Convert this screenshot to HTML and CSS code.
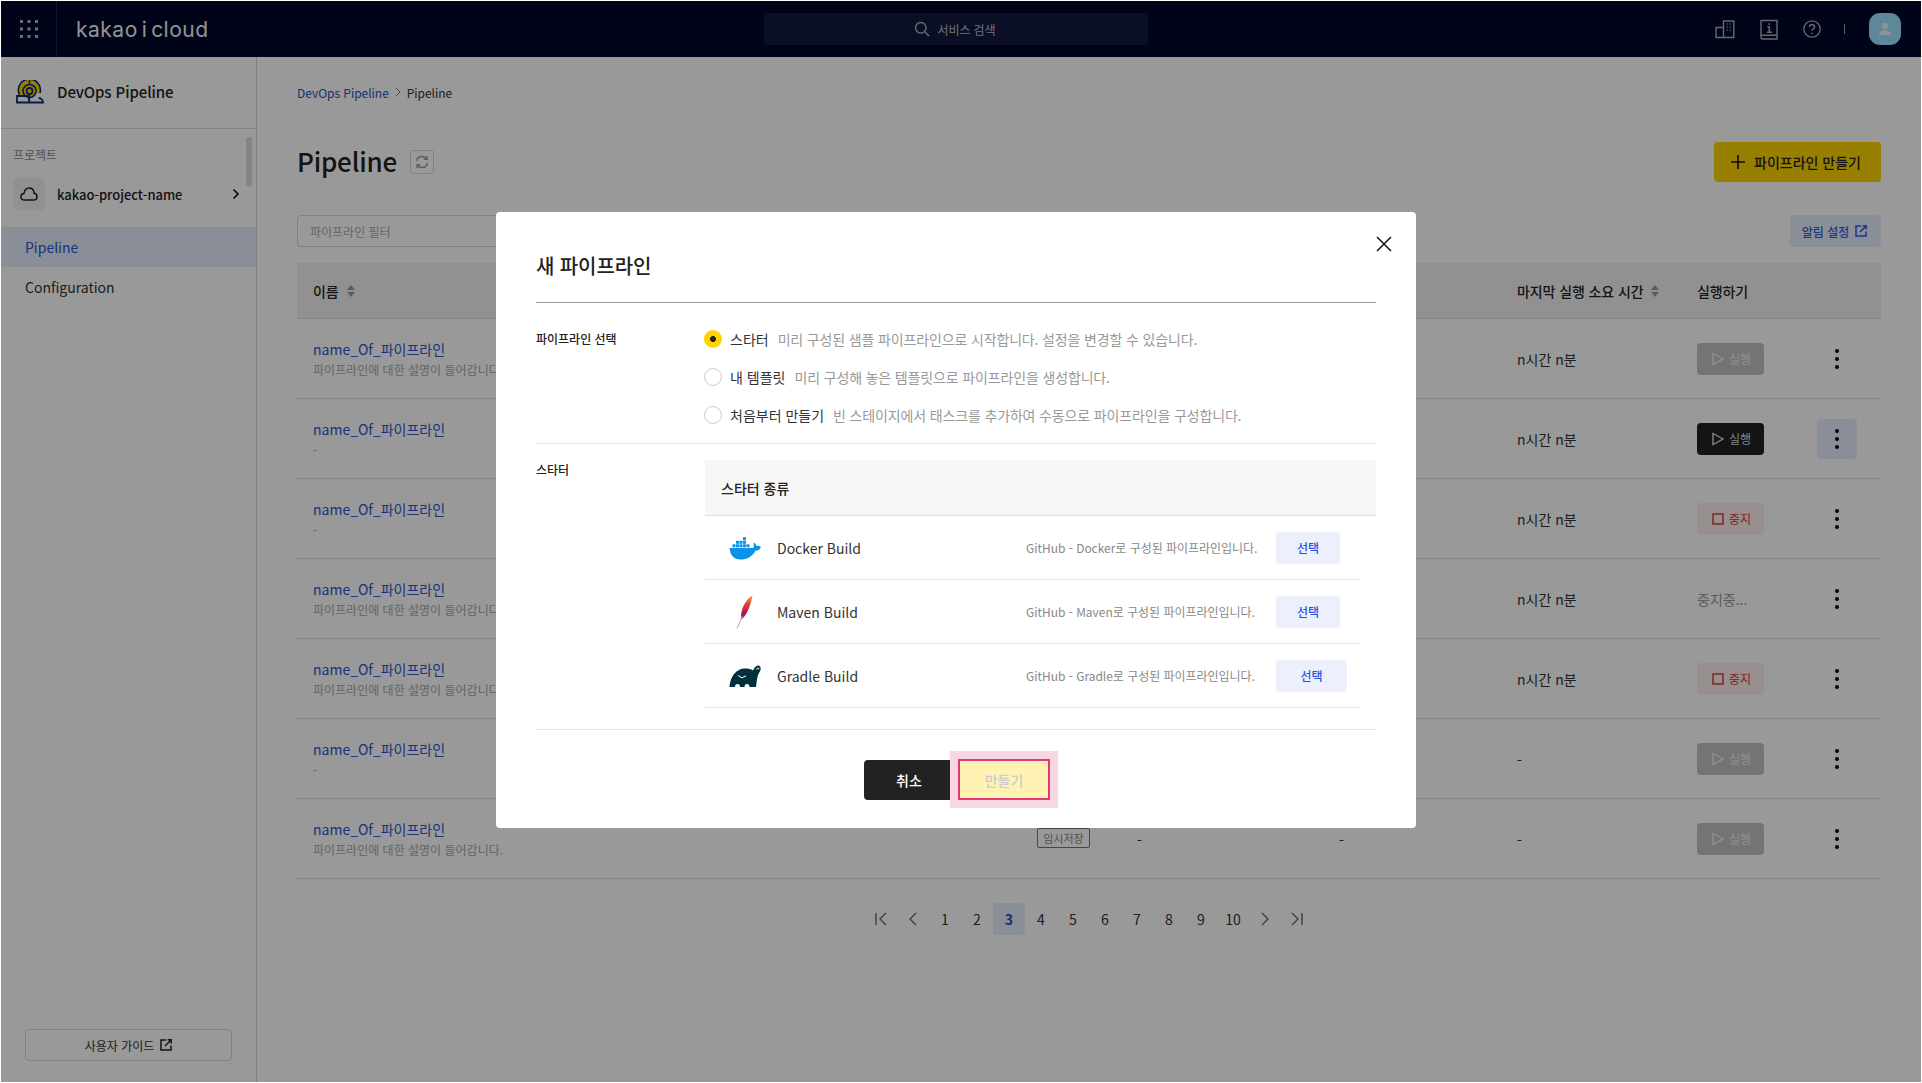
FILE: index.html
```html
<!DOCTYPE html>
<html lang="ko">
<head>
<meta charset="utf-8">
<title>Pipeline</title>
<link rel="stylesheet" href="styles.css">
</head>
<body>
<div class="app">
  <header class="topbar">
    <div class="waffle">
      <svg width="18" height="18" viewBox="0 0 18 18" fill="#b8b8b8"><rect x="0" y="0" width="3" height="3"/><rect x="7.5" y="0" width="3" height="3"/><rect x="15" y="0" width="3" height="3"/><rect x="0" y="7.5" width="3" height="3"/><rect x="7.5" y="7.5" width="3" height="3"/><rect x="15" y="7.5" width="3" height="3"/><rect x="0" y="15" width="3" height="3"/><rect x="7.5" y="15" width="3" height="3"/><rect x="15" y="15" width="3" height="3"/></svg>
    </div>
    <div class="logo">kakao i cloud</div>
    <div class="search">
      <svg width="16" height="16" viewBox="0 0 16 16" fill="none" stroke="#b4b4b4" stroke-width="1.4"><circle cx="6.8" cy="6.8" r="5.3"/><path d="M10.8 10.8 15 15"/></svg>
      <span>서비스 검색</span>
    </div>
    <div class="top-icons">
      <svg width="20" height="20" viewBox="0 0 20 20" fill="none" stroke="#b0b0b0" stroke-width="1.4"><path d="M1 8.5h7.5V18.500H1zM8.500 18.500V2H18.800V18.500H8.500"/><path d="M11.500 5h1.500M14.500 5h1.500M11.500 8h1.500M14.500 8h1.500M11.500 11h1.500M14.500 11h1.500" stroke-width="1.200"/></svg>
      <svg class="book" width="18" height="21" viewBox="0 0 18 21" fill="none" stroke="#b0b0b0" stroke-width="1.400"><path d="M1 18V1.500H17V20H2.500C1.500 20 1 19.300 1 18C1 16.800 1.500 16.200 2.500 16.200H17"/><path d="M9 4.200v1.500M7.300 8h2v5.200M6.800 13.200h5" stroke-width="1.600"/></svg>
      <svg class="help" width="18" height="18" viewBox="0 0 18 18" fill="none" stroke="#b0b0b0" stroke-width="1.300"><circle cx="9" cy="9" r="8.200"/><path d="M6.500 7C6.500 5.400 7.700 4.500 9.100 4.500C10.600 4.500 11.600 5.500 11.600 6.800C11.600 8.700 9 8.800 9 10.800" stroke-width="1.500"/><circle cx="9" cy="13.300" r=".9" fill="#b0b0b0" stroke="none"/></svg>
      <span class="top-sep"></span>
      <div class="avatar">
        <svg width="14" height="14" viewBox="0 0 14 14" fill="#eaf4ff"><circle cx="7" cy="4" r="3.200"/><path d="M1 13c0-3.200 2.600-4.800 6-4.800s6 1.600 6 4.800z"/></svg>
      </div>
    </div>
  </header>

  <div class="body">
    <aside class="sidebar">
      <div class="side-title">
        <svg width="28" height="24" viewBox="0 0 28 24" fill="none">
          <path d="M3.500 15A11 11 0 1 1 24 13" stroke="#0b2a78" stroke-width="1.600" fill="#ffd400"/>
          <circle cx="13.500" cy="11" r="6.500" fill="#ffd400" stroke="#0b2a78" stroke-width="1.600"/>
          <circle cx="13.500" cy="11" r="3" fill="#ffd400" stroke="#0b2a78" stroke-width="1.800"/>
          <path d="M13.500 0v5M13.500 17v4" stroke="#0b2a78" stroke-width="1.400"/>
          <path d="M1 16H13V22.500H1zM13 22.500H27C27 20.500 25.500 18 22.500 18" stroke="#0b2a78" stroke-width="1.800"/>
        </svg>
        <span>DevOps Pipeline</span>
      </div>
      <div class="side-section">
        <div class="side-label">프로젝트</div>
        <div class="project">
          <span class="project-icon">
            <svg width="18" height="14" viewBox="0 0 18 14" fill="none" stroke="#222" stroke-width="1.500"><path d="M4.500 13C2.300 13 1 11.500 1 9.700C1 7.900 2.300 6.600 4 6.500C4.500 3.200 6.500 1 9.200 1C12 1 13.900 3.200 14.200 6.300C15.900 6.700 17 8 17 9.700C17 11.600 15.600 13 13.500 13Z"/></svg>
          </span>
          <span class="project-name">kakao-project-name</span>
          <svg width="8" height="12" viewBox="0 0 8 12" fill="none" stroke="#111" stroke-width="1.600"><path d="M1.500 1.500 6 6l-4.500 4.500"/></svg>
        </div>
      </div>
      <nav class="side-menu">
        <a class="side-item side-active">Pipeline</a>
        <a class="side-item">Configuration</a>
      </nav>
      <div class="side-foot">
        <a class="guide">사용자 가이드
          <svg width="12" height="12" viewBox="0 0 12 12" fill="none" stroke="#222" stroke-width="1.500"><path d="M6 1H1v10h10V6.500"/><path d="M5 7 11 1M7.500 .8H11.200V4.500"/></svg>
        </a>
      </div>
      <span class="side-thumb"></span>
    </aside>

    <main class="main">
      <div class="crumbs"><a>DevOps Pipeline</a>
        <svg width="6" height="10" viewBox="0 0 6 10" fill="none" stroke="#777" stroke-width="1"><path d="M1 1l4 4-4 4"/></svg>
        <span>Pipeline</span></div>
      <div class="title-row">
        <h1>Pipeline</h1>
        <span class="refresh">
          <svg width="14" height="14" viewBox="0 0 14 14" fill="none" stroke="#9a9a9a" stroke-width="1.400"><path d="M1.500 6C2 3.400 4.200 1.500 7 1.500C9 1.500 10.700 2.500 11.700 4M12.500 8C12 10.600 9.800 12.500 7 12.500C5 12.500 3.300 11.500 2.300 10"/><path d="M12 1v3.300H8.800M2 13V9.700H5.200"/></svg>
        </span>
        <button class="create">
          <svg width="16" height="16" viewBox="0 0 16 16" stroke="#111" stroke-width="1.600"><path d="M8 1v14M1 8h14"/></svg>
          파이프라인 만들기
        </button>
      </div>
      <div class="filter-row">
        <div class="filter">파이프라인 필터</div>
        <a class="alert">알림 설정
          <svg width="12" height="12" viewBox="0 0 12 12" fill="none" stroke="#2a5ce0" stroke-width="1.500"><path d="M6 1H1v10h10V6.500"/><path d="M5 7 11 1M7.500 .8H11.200V4.500"/></svg>
        </a>
      </div>

      <div class="table">
        <div class="row head">
          <span class="sortable">이름 <i class="sort"></i></span><span>상태</span><span>마지막 실행</span><span>트리거</span>
          <span class="sortable">마지막 실행 소요 시간 <i class="sort"></i></span><span>실행하기</span><span></span>
        </div>
        <div class="row">
          <div class="name"><a>name_Of_파이프라인</a><small>파이프라인에 대한 설명이 들어갑니다.</small></div><span></span><span></span><span></span>
          <span>n시간 n분</span><button class="run off"><svg width="12" height="14" viewBox="0 0 12 14" fill="none" stroke="currentColor" stroke-width="1.400"><path d="M1 1.500 11 7 1 12.500z"/></svg>실행</button>
          <span class="more"><b></b><b></b><b></b></span>
        </div>
        <div class="row">
          <div class="name"><a>name_Of_파이프라인</a><small>-</small></div><span></span><span></span><span></span>
          <span>n시간 n분</span><button class="run on"><svg width="12" height="14" viewBox="0 0 12 14" fill="none" stroke="currentColor" stroke-width="1.400"><path d="M1 1.500 11 7 1 12.500z"/></svg>실행</button>
          <span class="more more-hover"><b></b><b></b><b></b></span>
        </div>
        <div class="row">
          <div class="name"><a>name_Of_파이프라인</a><small>-</small></div><span></span><span></span><span></span>
          <span>n시간 n분</span><button class="run stop"><svg width="12" height="12" viewBox="0 0 12 12" fill="none" stroke="currentColor" stroke-width="1.400"><rect x="1" y="1" width="10" height="10"/></svg>중지</button>
          <span class="more"><b></b><b></b><b></b></span>
        </div>
        <div class="row">
          <div class="name"><a>name_Of_파이프라인</a><small>파이프라인에 대한 설명이 들어갑니다.</small></div><span></span><span></span><span></span>
          <span>n시간 n분</span><span class="stopping">중지중...</span>
          <span class="more"><b></b><b></b><b></b></span>
        </div>
        <div class="row">
          <div class="name"><a>name_Of_파이프라인</a><small>파이프라인에 대한 설명이 들어갑니다.</small></div><span></span><span></span><span></span>
          <span>n시간 n분</span><button class="run stop"><svg width="12" height="12" viewBox="0 0 12 12" fill="none" stroke="currentColor" stroke-width="1.400"><rect x="1" y="1" width="10" height="10"/></svg>중지</button>
          <span class="more"><b></b><b></b><b></b></span>
        </div>
        <div class="row">
          <div class="name"><a>name_Of_파이프라인</a><small>-</small></div><span></span><span></span><span></span>
          <span class="dash">-</span><button class="run off"><svg width="12" height="14" viewBox="0 0 12 14" fill="none" stroke="currentColor" stroke-width="1.400"><path d="M1 1.500 11 7 1 12.500z"/></svg>실행</button>
          <span class="more"><b></b><b></b><b></b></span>
        </div>
        <div class="row">
          <div class="name"><a>name_Of_파이프라인</a><small>파이프라인에 대한 설명이 들어갑니다.</small></div><span class="tag">임시저장</span><span class="dash">-</span><span class="dash">-</span>
          <span class="dash">-</span><button class="run off"><svg width="12" height="14" viewBox="0 0 12 14" fill="none" stroke="currentColor" stroke-width="1.400"><path d="M1 1.500 11 7 1 12.500z"/></svg>실행</button>
          <span class="more"><b></b><b></b><b></b></span>
        </div>
      </div>

      <div class="pager">
        <a class="pg"><svg width="12" height="14" viewBox="0 0 12 14" fill="none" stroke="#6a6a6a" stroke-width="1.400"><path d="M1 1v12M11 1 5 7l6 6"/></svg></a>
        <a class="pg"><svg width="8" height="14" viewBox="0 0 8 14" fill="none" stroke="#6a6a6a" stroke-width="1.400"><path d="M7 1 1 7l6 6"/></svg></a>
        <a class="pg">1</a><a class="pg">2</a><a class="pg pg-on">3</a><a class="pg">4</a><a class="pg">5</a><a class="pg">6</a><a class="pg">7</a><a class="pg">8</a><a class="pg">9</a><a class="pg">10</a>
        <a class="pg"><svg width="8" height="14" viewBox="0 0 8 14" fill="none" stroke="#6a6a6a" stroke-width="1.400"><path d="M1 1l6 6-6 6"/></svg></a>
        <a class="pg"><svg width="12" height="14" viewBox="0 0 12 14" fill="none" stroke="#6a6a6a" stroke-width="1.400"><path d="M11 1v12M1 1l6 6-6 6"/></svg></a>
      </div>
    </main>
  </div>

  <div class="overlay">
    <section class="modal">
      <svg class="close" width="16" height="16" viewBox="0 0 16 16" stroke="#111" stroke-width="1.500"><path d="M1 1 15 15M15 1 1 15"/></svg>
      <h2>새 파이프라인</h2>
      <div class="form-row first">
        <div class="form-label">파이프라인 선택</div>
        <div class="radios">
          <label class="radio"><i class="dot dot-on"></i><b>스타터</b><span>미리 구성된 샘플 파이프라인으로 시작합니다. 설정을 변경할 수 있습니다.</span></label>
          <label class="radio"><i class="dot"></i><b>내 템플릿</b><span>미리 구성해 놓은 템플릿으로 파이프라인을 생성합니다.</span></label>
          <label class="radio"><i class="dot"></i><b>처음부터 만들기</b><span>빈 스테이지에서 태스크를 추가하여 수동으로 파이프라인을 구성합니다.</span></label>
        </div>
      </div>
      <div class="form-row second">
        <div class="form-label">스타터</div>
        <div class="starter">
          <div class="starter-head">스타터 종류</div>
          <div class="starter-row">
            <span class="starter-icon">
              <svg width="32" height="24" viewBox="0 0 32 24" fill="#0a92e6">
                <path d="M.6 12H24.200C25 10 25 8.300 24.400 6.800C26 7 27 8.400 27.300 9.800C29 9.700 30.800 10.200 32 11C30.800 13.800 28.600 14.700 26.500 14.700C24 20 18 23.500 11.500 23.500C5 23.500 .8 19 .6 12Z"/>
                <rect x="3.500" y="8.300" width="3" height="3"/><rect x="7" y="8.300" width="3" height="3"/><rect x="10.500" y="8.300" width="3" height="3"/><rect x="14" y="8.300" width="3" height="3"/><rect x="17.500" y="8.300" width="3" height="3"/>
                <rect x="7" y="4.800" width="3" height="3"/><rect x="10.500" y="4.800" width="3" height="3"/><rect x="14" y="4.800" width="3" height="3"/>
                <rect x="14" y="1.200" width="3" height="3"/>
              </svg>
            </span>
            <span class="starter-name">Docker Build</span>
            <span class="starter-desc">GitHub - Docker로 구성된 파이프라인입니다.</span>
            <button class="pick">선택</button>
          </div>
          <div class="starter-row">
            <span class="starter-icon">
              <svg width="32" height="34" viewBox="0 0 32 34" fill="none">
                <defs><linearGradient id="feather" x1="0" y1="0" x2="0" y2="1"><stop offset="0" stop-color="#f9a03c"/><stop offset=".35" stop-color="#e2442f"/><stop offset=".7" stop-color="#b5194f"/><stop offset="1" stop-color="#6b2a8f"/></linearGradient></defs>
                <path d="M23.500 .5C18 3.500 12.500 11 12 21L12.300 24.500C17 21 21.500 12 23.500 .5Z" fill="url(#feather)"/>
                <path d="M13.500 21 8 33.500" stroke="#b79ac9" stroke-width="1"/>
              </svg>
            </span>
            <span class="starter-name">Maven Build</span>
            <span class="starter-desc">GitHub - Maven로 구성된 파이프라인입니다.</span>
            <button class="pick">선택</button>
          </div>
          <div class="starter-row">
            <span class="starter-icon">
              <svg width="32" height="22" viewBox="0 0 32 22" fill="#02303a">
                <path d="M.5 22C1 15 4 8 10 5C14 3 20 3 24 5.500C25 3 27 .5 29 .5C31.500 .5 32 3 31.500 5C31 6.500 30 8 29 10C28 13 27.500 18 27 22H20.500C20.500 19.800 19.500 19 18 19C16.500 19 15.500 19.800 15.500 22H11C11 19.800 10 19 8.500 19C7 19 6 19.800 6 22Z"/>
                <path d="M27.500 4.500C28 2.500 30.200 2.500 29.700 4.500" fill="none" stroke="#fff" stroke-width="1"/>
                <path d="M9 10.500 13 12.800 17 10.800" fill="none" stroke="#fff" stroke-width="1"/>
              </svg>
            </span>
            <span class="starter-name">Gradle Build</span>
            <span class="starter-desc">GitHub - Gradle로 구성된 파이프라인입니다.</span>
            <button class="pick pick-wide">선택</button>
          </div>
        </div>
      </div>
      <div class="modal-foot">
        <button class="cancel">취소</button>
        <button class="make">만들기</button>
      </div>
    </section>
  </div>
</div>
</body>
</html>
```

FILE: styles.css
```css
* { box-sizing: border-box; }
html, body { margin: 0; padding: 0; height: 100%; overflow: hidden; background: #fff; }
body { font-family: "Noto Sans CJK KR", "Noto Sans", sans-serif; color: #222; }
button { font-family: inherit; cursor: pointer; }
h1, h2 { margin: 0; }

.app { position: relative; margin: 1px; width: 1920px; height: 1081px; display: flex; flex-direction: column; overflow: hidden; background: #fff; }

/* top bar */
.topbar { height: 56px; flex: none; display: flex; align-items: center; background: #00072b; position: relative; }
.waffle { width: 56px; height: 56px; display: flex; align-items: center; justify-content: center; border-right: 1px solid #1c2340; }
.logo { margin-left: 19px; font-family: "Inter", sans-serif; font-size: 21px; letter-spacing: .5px; word-spacing: -2.5px; color: #f4f4f4; width: 300px; line-height: 1; }
.search { position: absolute; left: 763px; top: 12px; width: 384px; height: 32px; border-radius: 3px; background: #121a40; display: flex; align-items: center; justify-content: center; gap: 8px; padding-right: 3px; font-size: 12px; letter-spacing: -.1px; color: #c0c0c0; }
.top-icons { margin-left: auto; display: flex; align-items: center; margin-right: 20px; }
.top-icons svg { flex: none; }
.book { margin-left: 25px; }
.help { margin-left: 25px; }
.top-sep { width: 1px; height: 10px; background: #a0a0a0; margin: 0 24px 0 23px; }
.avatar { width: 32px; height: 32px; border-radius: 11px; background: #9de1ff; display: flex; align-items: center; justify-content: center; }

/* shell */
.body { flex: 1; display: flex; min-height: 0; }
.sidebar { position: relative; width: 256px; flex: none; border-right: 1px solid #d0d0d0; display: flex; flex-direction: column; }
.side-title { height: 72px; flex: none; display: flex; align-items: center; gap: 13px; padding: 0 0 2px 15px; border-bottom: 1px solid #dcdcdc; font-size: 15px; font-weight: 500; letter-spacing: -.1px; color: #222; }
.side-section { padding: 17px 12px 0; }
.side-label { font-size: 12px; line-height: 18px; color: #888; }
.project { display: flex; align-items: center; margin-top: 14px; font-size: 13px; font-weight: 500; letter-spacing: -.05px; }
.project-icon { width: 32px; height: 32px; border-radius: 4px; background: #f2f2f2; display: flex; align-items: center; justify-content: center; }
.project-name { margin-left: 12px; width: 175px; }
.side-menu { margin-top: 17px; display: flex; flex-direction: column; }
.side-item { height: 40px; display: flex; align-items: center; padding-left: 24px; font-size: 14px; color: #333; }
.side-active { background: #e6eefc; color: #2a55d8; }
.side-foot { margin-top: auto; padding: 0 24px 21px; }
.guide { height: 32px; border: 1px solid #d8d8d8; border-radius: 4px; display: flex; align-items: center; justify-content: center; gap: 6px; font-size: 12px; color: #333; }
.side-thumb { position: absolute; left: 245px; top: 80px; width: 6px; height: 50px; border-radius: 3px; background: #dcdcdc; }

/* main */
.main { flex: 1; min-width: 0; padding: 26px 40px 0; }
.crumbs { height: 20px; display: flex; align-items: center; gap: 6px; padding-bottom: 2px; font-size: 12px; letter-spacing: -.03px; color: #333; }
.crumbs a { color: #2a4fc0; }
.title-row { margin-top: 39px; height: 40px; display: flex; align-items: center; }
.title-row h1 { height: 40px; padding-bottom: 2px; font-size: 26px; font-weight: 500; letter-spacing: -.2px; color: #222; line-height: 38px; }
.refresh { margin-left: 13px; width: 24px; height: 24px; border: 1px solid #d8d8d8; border-radius: 3px; display: flex; align-items: center; justify-content: center; }
.create { margin-left: auto; width: 167px; height: 40px; border: 0; border-radius: 4px; background: #ffd400; display: flex; align-items: center; justify-content: center; gap: 8px; font-size: 14px; font-weight: 500; color: #222; padding: 0 4px 0 0; }
.filter-row { margin-top: 33px; height: 32px; display: flex; justify-content: space-between; }
.filter { width: 330px; border: 1px solid #d6d6d6; border-radius: 4px; display: flex; align-items: center; padding-left: 12px; font-size: 12px; color: #aaa; }
.alert { width: 91px; border-radius: 4px; background: #e6eefc; display: flex; align-items: center; justify-content: center; gap: 6px; padding-right: 2px; font-size: 12px; font-weight: 500; color: #2a5ce0; }

/* table */
.table { margin-top: 16px; }
.row { display: grid; grid-template-columns: 724px 100px 202px 178px 180px 120px 40px; align-items: center; height: 80px; padding-left: 16px; border-bottom: 1px solid #dcdcdc; font-size: 14px; color: #333; }
.row.head { height: 56px; background: #f2f2f2; font-weight: 500; color: #222; letter-spacing: -.1px; }
.sortable { display: flex; align-items: center; gap: 8px; }
.sort { position: relative; width: 8px; height: 12px; }
.sort::before, .sort::after { content: ""; position: absolute; left: 0; border-left: 4px solid transparent; border-right: 4px solid transparent; }
.sort::before { top: 0; border-bottom: 5px solid #999; }
.sort::after { bottom: 0; border-top: 5px solid #999; }
.name { display: flex; flex-direction: column; padding-top: 1px; }
.name a { line-height: 20px; font-size: 14px; color: #2f55cc; }
.name small { margin-top: 1px; line-height: 20px; font-size: 12px; color: #a8a8a8; }
.dash { margin-top: 3px; }
.tag { justify-self: start; height: 20px; width: 53px; margin-top: -1px; border: 1px solid #777; border-radius: 2px; display: flex; align-items: center; justify-content: center; font-size: 11px; color: #888; }
.run { width: 67px; height: 32px; border: 0; border-radius: 4px; display: flex; align-items: center; gap: 5px; padding: 0 0 0 15px; font-size: 12px; }
.run.off { background: #c2c2c2; color: #f0f0f0; }
.run.on { background: #222; color: #ddd; }
.run.stop { background: #fbeeec; color: #d9352b; }
.stopping { color: #999; }
.more { grid-column: 7; width: 40px; height: 40px; border-radius: 4px; display: flex; flex-direction: column; align-items: center; justify-content: center; gap: 4px; }
.more b { width: 4px; height: 4px; border-radius: 50%; background: #000; }
.more-hover { background: #e6eefc; }

/* pager */
.pager { margin-top: 24px; display: flex; justify-content: center; }
.pg { width: 32px; height: 32px; border-radius: 4px; display: flex; align-items: center; justify-content: center; font-size: 14px; color: #333; }
.pg-on { background: #e6eefc; color: #2a4fc0; font-weight: 700; }

/* modal */
.overlay { position: absolute; inset: 0; background: rgba(0, 0, 0, .4); display: flex; justify-content: center; align-items: flex-start; padding: 211px 10px 0 0; }
.modal { position: relative; width: 920px; height: 616px; background: #fff; border-radius: 4px; padding: 0 40px; }
.close { position: absolute; right: 24px; top: 24px; }
.modal h2 { height: 91px; padding-top: 36px; border-bottom: 1px solid #999; font-size: 20px; font-weight: 500; line-height: 36px; letter-spacing: -.1px; color: #222; }
.form-row { display: flex; border-bottom: 1px solid #e5e5e5; }
.form-row.first { height: 141px; padding-top: 26px; }
.form-row.second { height: 286px; padding-top: 16px; }
.form-label { width: 168px; flex: none; font-size: 12px; font-weight: 500; line-height: 20px; color: #222; }
.radios { display: flex; flex-direction: column; gap: 18px; }
.radio { display: flex; align-items: center; height: 20px; font-size: 14px; }
.radio b { font-weight: 400; color: #333; margin-left: 8px; }
.radio span { margin-left: 9px; color: #999; letter-spacing: -.15px; }
.dot { width: 18px; height: 18px; border-radius: 50%; border: 1px solid #ccc; background: #fff; flex: none; }
.dot-on { border: 0; background: radial-gradient(circle, #222 0 2.600px, #ffd400 3.300px); }
.starter { width: 671px; margin-left: 1px; }
.starter-head { height: 56px; background: #f7f7f7; border-bottom: 1px solid #e0e0e0; padding-left: 16px; display: flex; align-items: center; font-size: 14px; font-weight: 500; color: #222; }
.starter-row { position: relative; width: 655px; height: 64px; border-bottom: 1px solid #e5e5e5; display: flex; align-items: center; }
.starter-icon { width: 32px; margin-left: 24px; display: flex; align-items: center; justify-content: center; flex: none; }
.starter-name { width: 249px; margin-left: 16px; font-size: 14px; color: #333; }
.starter-desc { width: 250px; font-size: 12px; letter-spacing: -.03px; color: #888; flex: none; }
.pick { width: 64px; height: 32px; border: 0; border-radius: 4px; background: #ebf0fc; color: #1f55e0; font-size: 12px; font-weight: 500; padding: 0; flex: none; }
.pick-wide { width: 71px; }
.modal-foot { display: flex; justify-content: center; align-items: flex-start; gap: 4px; padding: 30px 0 0 2px; }
.cancel { width: 90px; height: 40px; border: 0; border-radius: 4px; background: #222; color: #fff; font-size: 14px; font-weight: 500; }
.make { width: 92px; height: 41px; margin-top: -1px; border: 2px solid #e23a70; border-radius: 0; background: #fff2b3; color: #ccc; font-size: 14px; font-weight: 500; box-shadow: 0 0 0 8px #f8d7e3; }
```
